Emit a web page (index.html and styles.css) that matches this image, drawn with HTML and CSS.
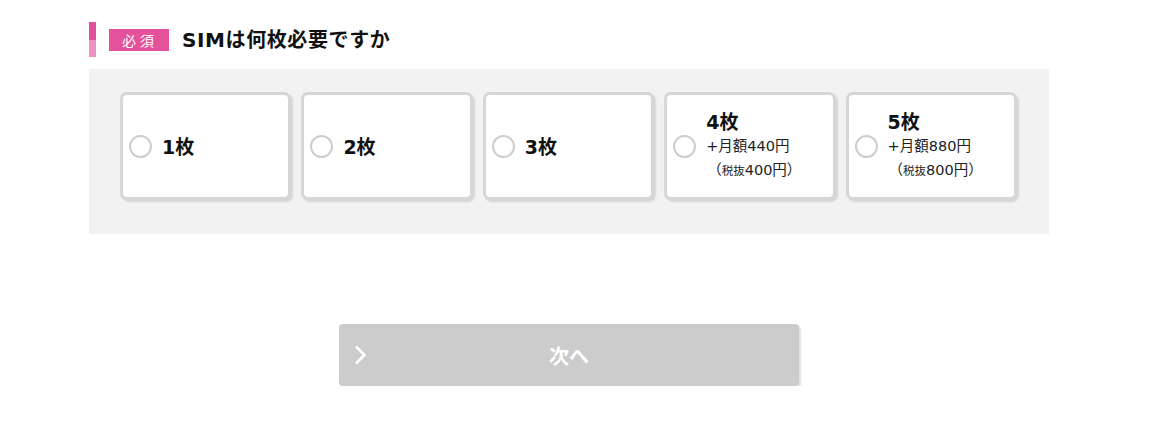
FILE: index.html
```html
<!DOCTYPE html>
<html lang="ja">
<head>
<meta charset="utf-8">
<link rel="stylesheet" href="styles.css">
</head>
<body>
<div class="container">
  <div class="heading">
    <span class="bar"></span>
    <span class="badge">必須</span>
    <h2 class="title">SIMは何枚必要ですか</h2>
  </div>
  <div class="panel">
    <label class="card"><span class="radio"></span><span class="label"><span class="count">1枚</span></span></label>
    <label class="card"><span class="radio"></span><span class="label"><span class="count">2枚</span></span></label>
    <label class="card"><span class="radio"></span><span class="label"><span class="count">3枚</span></span></label>
    <label class="card"><span class="radio"></span><span class="label"><span class="count">4枚</span><span class="price">+月額440円</span><span class="tax">（<small>税抜</small>400円）</span></span></label>
    <label class="card"><span class="radio"></span><span class="label"><span class="count">5枚</span><span class="price">+月額880円</span><span class="tax">（<small>税抜</small>800円）</span></span></label>
  </div>
  <div class="actions">
    <button class="next" type="button">
      <svg class="chev" width="14" height="20" viewBox="0 0 14 20"><path d="M2 1.5 L10.5 10 L2 18.5" fill="none" stroke="#fff" stroke-width="2.6"/></svg>
      <span>次へ</span>
    </button>
  </div>
</div>
</body>
</html>
```
FILE: styles.css
```css
* { box-sizing: border-box; }
html, body { margin: 0; padding: 0; background: #fff; }
body {
  font-family: "DejaVu Sans", "Noto Sans CJK JP", sans-serif;
  color: #111;
}
.container {
  width: 960px;
  margin-left: 89px;
  padding-top: 22px;
}
.heading {
  display: flex;
  align-items: center;
  height: 35px;
}
.bar {
  width: 7px;
  height: 35px;
  background: linear-gradient(#e0509b 0, #e0509b 52%, #ef92c2 52%, #ef92c2 100%);
}
.badge {
  margin-left: 13px;
  width: 60px;
  height: 22px;
  background: #e5529c;
  color: #fff;
  font-family: "Noto Sans CJK JP", sans-serif;
  font-size: 14px;
  line-height: 22px;
  letter-spacing: 4px;
  text-indent: 2px;
  text-align: center;
}
.title {
  margin: 0 0 0 13px;
  font-size: 20px;
  font-weight: bold;
  line-height: 24px;
  letter-spacing: 0.6px;
  color: #111;
}
.panel {
  margin-top: 12px;
  background: #f2f2f2;
  padding: 23px 32px 34px 31px;
  display: grid;
  grid-template-columns: repeat(5, 1fr);
  gap: 10px;
}
.card {
  height: 108px;
  background: #fff;
  border: 3px solid #d6d6d6;
  border-radius: 7px;
  box-shadow: 2px 2px 2px rgba(0,0,0,0.12);
  display: flex;
  align-items: center;
  padding-left: 6px;
}
.radio {
  flex: none;
  width: 23px;
  height: 23px;
  border: 2px solid #cdcdcd;
  border-radius: 50%;
  background: #fff;
}
.label {
  margin-left: 10px;
  display: flex;
  flex-direction: column;
}
.count {
  font-size: 19px;
  font-weight: bold;
  line-height: 24px;
  padding-top: 1px;
}
.price, .tax {
  font-size: 14.5px;
  line-height: 24px;
  color: #222;
}
.tax { padding-left: 1px; }
.tax small { font-size: 11.5px; }
.actions {
  margin-top: 90px;
  display: flex;
  justify-content: center;
}
.next {
  position: relative;
  width: 460px;
  height: 62px;
  border: 0;
  border-radius: 4px;
  background: #cccccc;
  box-shadow: 2px 2px 2px rgba(0,0,0,0.12);
  color: #fff;
  font-family: "Noto Sans CJK JP", sans-serif;
  font-size: 20px;
  font-weight: bold;
  display: flex;
  align-items: center;
  justify-content: center;
  padding: 0;
}
.chev {
  position: absolute;
  left: 15px;
  top: 21px;
}
```
